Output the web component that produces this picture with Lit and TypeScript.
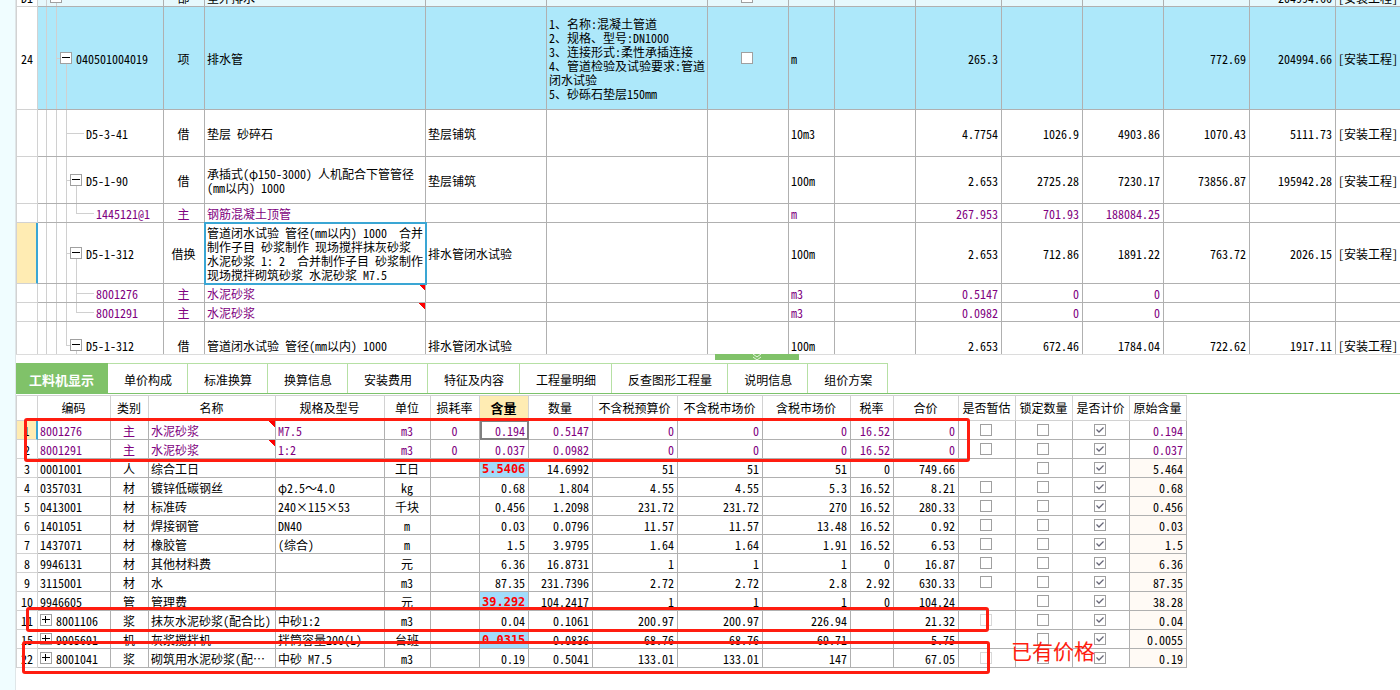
import { LitElement, html, css, nothing } from "lit";
import { customElement } from "lit/decorators.js";
import { classMap } from "lit/directives/class-map.js";

interface CostRow {
  no?: string;
  guides: string[];
  box?: boolean;
  code: string;
  kind: string;
  name: string;
  spec?: string;
  desc?: string;
  check?: boolean;
  unit?: string;
  nums: string[];
  trade?: string;
  size: string;
  tone?: string;
  focus?: boolean;
  flag?: boolean;
}

const TRADE = "[安装工程]";

const COST_ROWS: CostRow[] = [
  { no: "D1", guides: ["tee"], box: true, code: "", kind: "部", name: "室外排水", check: true, nums: ["", "", "", "", "204994.66"], trade: TRADE, size: "h19", tone: "pale" },
  {
    no: "24", guides: ["bar", "tee"], box: true, code: "040501004019", kind: "项", name: "排水管",
    desc: "1、名称:混凝土管道\n2、规格、型号:DN1000\n3、连接形式:柔性承插连接\n4、管道检验及试验要求:管道\n闭水试验\n5、砂砾石垫层150mm",
    check: true, unit: "m", nums: ["265.3", "", "", "772.69", "204994.66"], trade: TRADE, size: "h103", tone: "blue",
  },
  { guides: ["bar", "bar", "tee long"], code: "D5-3-41", kind: "借", name: "垫层 砂碎石", spec: "垫层铺筑", unit: "10m3", nums: ["4.7754", "1026.9", "4903.86", "1070.43", "5111.73"], trade: TRADE, size: "h47" },
  { guides: ["bar", "bar", "tee"], box: true, code: "D5-1-90", kind: "借", name: "承插式(φ150-3000) 人机配合下管管径\n(mm以内) 1000", spec: "垫层铺筑", unit: "100m", nums: ["2.653", "2725.28", "7230.17", "73856.87", "195942.28"], trade: TRADE, size: "h47" },
  { guides: ["bar", "bar", "bar", "ell long"], code: "1445121@1", kind: "主", name: "钢筋混凝土顶管", unit: "m", nums: ["267.953", "701.93", "188084.25", "", ""], size: "h19", tone: "purple" },
  {
    guides: ["bar", "bar", "tee"], box: true, code: "D5-1-312", kind: "借换",
    name: "管道闭水试验 管径(mm以内) 1000  合并\n制作子目 砂浆制作 现场搅拌抹灰砂浆\n水泥砂浆 1: 2  合并制作子目 砂浆制作\n现场搅拌砌筑砂浆 水泥砂浆 M7.5",
    spec: "排水管闭水试验", unit: "100m", nums: ["2.653", "712.86", "1891.22", "763.72", "2026.15"], trade: TRADE, size: "h61", focus: true,
  },
  { guides: ["bar", "bar", "bar", "tee long"], code: "8001276", kind: "主", name: "水泥砂浆", unit: "m3", nums: ["0.5147", "0", "0", "", ""], size: "h19", tone: "purple", flag: true },
  { guides: ["bar", "bar", "bar", "ell long"], code: "8001291", kind: "主", name: "水泥砂浆", unit: "m3", nums: ["0.0982", "0", "0", "", ""], size: "h19", tone: "purple", flag: true },
  { guides: ["bar", "bar", "ell"], box: true, code: "D5-1-312", kind: "借", name: "管道闭水试验 管径(mm以内) 1000", spec: "排水管闭水试验", unit: "100m", nums: ["2.653", "672.46", "1784.04", "722.62", "1917.11"], trade: TRADE, size: "h47" },
];

const TABS = ["工料机显示", "单价构成", "标准换算", "换算信息", "安装费用", "特征及内容", "工程量明细", "反查图形工程量", "说明信息", "组价方案"];

const HEADS = ["编码", "类别", "名称", "规格及型号", "单位", "损耗率", "含量", "数量", "不含税预算价", "不含税市场价", "含税市场价", "税率", "合价", "是否暂估", "锁定数量", "是否计价", "原始含量"];

// no, code, kind, name, spec, unit, loss, content, qty, budget, market, taxed, rate, total, estimate flag, original
const RES_ROWS: string[][] = [
  ["1", "8001276", "主", "水泥砂浆", "M7.5", "m3", "0", "0.194", "0.5147", "0", "0", "0", "16.52", "0", "y", "0.194"],
  ["2", "8001291", "主", "水泥砂浆", "1:2", "m3", "0", "0.037", "0.0982", "0", "0", "0", "16.52", "0", "y", "0.037"],
  ["3", "0001001", "人", "综合工日", "", "工日", "", "5.5406", "14.6992", "51", "51", "51", "0", "749.66", "", "5.464"],
  ["4", "0357031", "材", "镀锌低碳钢丝", "φ2.5～4.0", "kg", "", "0.68", "1.804", "4.55", "4.55", "5.3", "16.52", "8.21", "y", "0.68"],
  ["5", "0413001", "材", "标准砖", "240×115×53", "千块", "", "0.456", "1.2098", "231.72", "231.72", "270", "16.52", "280.33", "y", "0.456"],
  ["6", "1401051", "材", "焊接钢管", "DN40", "m", "", "0.03", "0.0796", "11.57", "11.57", "13.48", "16.52", "0.92", "y", "0.03"],
  ["7", "1437071", "材", "橡胶管", "(综合)", "m", "", "1.5", "3.9795", "1.64", "1.64", "1.91", "16.52", "6.53", "y", "1.5"],
  ["8", "9946131", "材", "其他材料费", "", "元", "", "6.36", "16.8731", "1", "1", "1", "0", "16.87", "y", "6.36"],
  ["9", "3115001", "材", "水", "", "m3", "", "87.35", "231.7396", "2.72", "2.72", "2.8", "2.92", "630.33", "y", "87.35"],
  ["10", "9946605", "管", "管理费", "", "元", "", "39.292", "104.2417", "1", "1", "1", "0", "104.24", "", "38.28"],
  ["11", "+8001106", "浆", "抹灰水泥砂浆(配合比)", "中砂1:2", "m3", "", "0.04", "0.1061", "200.97", "200.97", "226.94", "", "21.32", "d", "0.04"],
  ["15", "+9905691", "机", "灰浆搅拌机", "拌筒容量200(L)", "台班", "", "0.0315", "0.0836", "68.76", "68.76", "69.71", "", "5.75", "", "0.0055"],
  ["22", "+8001041", "浆", "砌筑用水泥砂浆(配…", "中砂 M7.5", "m3", "", "0.19", "0.5041", "133.01", "133.01", "147", "", "67.05", "d", "0.19"],
];

const CHANGED = new Set(["3", "10", "15"]);

const sheet = css`
  :host { display: block; }
  table {
    border-collapse: separate;
    border-spacing: 0;
    table-layout: fixed;
    font-size: 12px;
  }
  td, th {
    box-sizing: border-box;
    padding: 2px 3px 0 2px;
    border-right: 1px solid #b0b0b0;
    border-bottom: 1px solid #b0b0b0;
    font-weight: normal;
    text-align: left;
    vertical-align: middle;
    line-height: 14px;
    white-space: pre;
    overflow: hidden;
  }
  .no {
    padding: 2px 0 0;
    border-left: 1px solid #d2d2d2;
    border-right-color: #d2d2d2;
    border-bottom-color: #d2d2d2;
    text-align: center;
    background: #fff;
    color: #000;
  }
  .no.current { background: #ffecb3; border-right: 2px solid #3aa6d4; }
  .mid { text-align: center; padding: 2px 1px 0 0; }
  .tick { padding: 0 2px 0 0; }
  .num { text-align: right; }
  .purple { color: #800080; }
  .flag {
    background: linear-gradient(to bottom left, #f00 50%, transparent 50%) top right / 7px 6px no-repeat;
  }
  input {
    appearance: none;
    display: block;
    width: 12px;
    height: 12px;
    margin: 0 auto;
    border: 1px solid #a0a0a0;
    background: #fff;
  }
  input:checked {
    background: url("data:image/svg+xml,%3Csvg xmlns='http://www.w3.org/2000/svg' viewBox='0 0 10 10'%3E%3Cpath d='M1.5 4.5 4 7 8.5 2.5' fill='none' stroke='%23667' stroke-width='1.3'/%3E%3C/svg%3E") center / 10px 10px no-repeat #fff;
  }
  input:disabled { border-color: #d8d8d8; }
  .box {
    flex: none;
    display: flex;
    box-sizing: border-box;
    width: 12px;
    height: 12px;
    padding: 0;
    border: 1px solid #a0a0a0;
    background: #fff;
    white-space: normal;
  }
  .box svg { display: block; flex: none; width: 10px; height: 10px; }
`;

const toggle = (open: boolean) => html`<button class="box" type="button" aria-label=${open ? "收起" : "展开"}><svg viewBox="0 0 10 10"><path d=${open ? "M1 4H9V5H1Z" : "M1 4H9V5H1ZM4 1H5V8H4Z"} fill="#000" shape-rendering="crispEdges" /></svg></button>`;

@customElement("cost-grid")
class CostGrid extends LitElement {
  static styles = [sheet, css`
    table { width: 100%; min-width: 1384px; }
    td:last-child { border-right: 0; }
    .w22 { width: 22px; } .w126 { width: 126px; } .w41 { width: 41px; } .w221 { width: 221px; }
    .w121 { width: 121px; } .w161 { width: 161px; } .w81 { width: 81px; } .w46 { width: 46px; } .w86 { width: 86px; }
    .h19 td { height: 19px; } .h47 td { height: 47px; } .h61 td { height: 61px; } .h103 td { height: 103px; }
    tr.pale td:not(.no) { background-color: #e6f8fc; }
    tr.blue td:not(.no) { background-color: #ade8fa; }
    td.code { padding: 0 0 0 8px; }
    .tree { display: flex; align-items: center; height: 100%; }
    .guide {
      --c: linear-gradient(#d0d0d0, #d0d0d0);
      flex: none;
      align-self: stretch;
      width: 10px;
      background: var(--c) 0 0 / 1px 100% no-repeat;
    }
    .tee { width: 4px; background: var(--c) 0 0 / 1px 100% no-repeat, var(--c) 0 50% / 100% 1px no-repeat; }
    .ell { width: 4px; background: var(--c) 0 0 / 1px 50% no-repeat, var(--c) 0 50% / 100% 1px no-repeat; }
    .long { width: 18px; }
    .stem {
      flex: none;
      align-self: stretch;
      display: flex;
      align-items: center;
      width: 12px;
      margin-right: 2px;
      background: linear-gradient(#d0d0d0, #d0d0d0) 6px 100% / 1px 50% no-repeat;
    }
    .label { padding: 2px 0 0 2px; }
    td.focus { position: relative; outline: 2px solid #3aa6d4; outline-offset: -1px; }
  `];

  render() {
    const widths = [22, 126, 41, 221, 121, 161, 81, 46, 81, 86, 81, 81, 86, 86];
    return html`<table>
      <colgroup>${widths.map((w) => html`<col class="w${w}" />`)}<col /></colgroup>
      <tbody>${COST_ROWS.map((r) => html`
        <tr class="${r.size} ${r.tone ?? ""}">
          <td class=${classMap({ no: true, current: !!r.focus })}>${r.no}</td>
          <td class="code"><div class="tree">${r.guides.map((g) => html`<span class="guide ${g}"></span>`)}${r.box ? html`<span class="stem">${toggle(true)}</span>` : nothing}<span class="label">${r.code}</span></div></td>
          <td class="mid">${r.kind}</td>
          <td class=${classMap({ focus: !!r.focus, flag: !!r.flag })}>${r.name}</td>
          <td>${r.spec}</td>
          <td>${r.desc}</td>
          <td class="tick">${r.check ? html`<input type="checkbox" aria-label="主要清单" />` : nothing}</td>
          <td>${r.unit}</td>
          <td></td>
          ${r.nums.map((n) => html`<td class="num">${n}</td>`)}
          <td>${r.trade}</td>
        </tr>`)}</tbody>
    </table>`;
  }
}

@customElement("resource-grid")
class ResourceGrid extends LitElement {
  static styles = [sheet, css`
    .wrap { position: relative; width: max-content; }
    table { width: 1171px; }
    .w22 { width: 22px; } .w73 { width: 73px; } .w38 { width: 38px; } .w127 { width: 127px; } .w109 { width: 109px; }
    .w46 { width: 46px; } .w49 { width: 49px; } .w64 { width: 64px; } .w85 { width: 85px; } .w88 { width: 88px; }
    .w43 { width: 43px; } .w65 { width: 65px; } .w57 { width: 57px; }
    th { height: 26px; padding: 0 1px 0 0; text-align: center; border-color: #d2d2d2; border-top: 1px solid #d2d2d2; }
    td { height: 19px; }
    th.hot { background: #ffecb3; font-size: 13px; font-weight: bold; }
    td.changed { background: #a2dcfb; color: #f00; font-family: "DejaVu Sans Mono", monospace; font-weight: bold; }
    td.cell { border: 2px solid #808080; border-top-width: 1px; padding-right: 2px; }
    td.warm { background: #fffaf5; }
    .code { display: flex; align-items: center; gap: 4px; }
    td.fold { padding-top: 0; }
    .fold span { padding-top: 2px; }
    .mark { position: absolute; box-sizing: border-box; border: 3px solid #ff1d10; border-radius: 3px; pointer-events: none; }
    .m1 { left: 8px; top: 23px; width: 946px; height: 44px; }
    .m2 { left: 10px; top: 212px; width: 963px; height: 25px; }
    .m3 { left: 6px; top: 246px; width: 968px; height: 33px; }
    .note {
      position: absolute;
      left: 995px;
      top: 241px;
      margin: 0;
      font: 400 21px/28px "Noto Sans CJK SC", sans-serif;
      color: #ff1d10;
      white-space: nowrap;
    }
  `];

  render() {
    const widths = [22, 73, 38, 127, 109, 46, 49, 49, 64, 85, 85, 88, 43, 65, 57, 57, 57, 57];
    return html`<div class="wrap">
      <table>
        <colgroup>${widths.map((w) => html`<col class="w${w}" />`)}</colgroup>
        <thead><tr><th class="no"></th>${HEADS.map((h) => html`<th class=${h === "含量" ? "hot" : ""}>${h}</th>`)}</tr></thead>
        <tbody>${RES_ROWS.map((r, i) => {
          const fresh = i < 2;
          const folded = r[1].startsWith("+");
          return html`<tr class=${fresh ? "purple" : ""}>
            <td class=${classMap({ no: true, current: i === 0 })}>${r[0]}</td>
            <td class=${folded ? "fold" : ""}><div class="code">${folded ? toggle(false) : nothing}<span>${r[1].replace("+", "")}</span></div></td>
            <td class="mid">${r[2]}</td>
            <td class=${fresh ? "flag" : ""}>${r[3]}</td>
            <td>${r[4]}</td>
            <td class="mid">${r[5]}</td>
            <td class="mid">${r[6]}</td>
            <td class=${classMap({ num: true, cell: i === 0, changed: CHANGED.has(r[0]) })}>${r[7]}</td>
            ${r.slice(8, 14).map((n) => html`<td class="num">${n}</td>`)}
            <td class="tick">${r[14] ? html`<input type="checkbox" aria-label="是否暂估" ?disabled=${r[14] === "d"} />` : nothing}</td>
            <td class="tick"><input type="checkbox" aria-label="锁定数量" /></td>
            <td class="tick"><input type="checkbox" aria-label="是否计价" checked /></td>
            <td class=${classMap({ num: true, warm: !fresh })}>${r[15]}</td>
          </tr>`;
        })}</tbody>
      </table>
      <div class="mark m1"></div>
      <div class="mark m2"></div>
      <div class="mark m3"></div>
      <p class="note">已有价格</p>
    </div>`;
  }
}

@customElement("app-root")
class AppRoot extends LitElement {
  static styles = css`
    :host {
      display: flex;
      height: 100vh;
      overflow: hidden;
      background: #fff;
      color: #000;
      font-family: "Noto Sans Mono CJK SC", "Noto Sans CJK SC", sans-serif;
      font-size: 12px;
    }
    .rail { flex: none; box-sizing: border-box; width: 16px; background: #f0fdff; border-right: 1px solid #dfe6e8; }
    .main { flex: 1; min-width: 0; display: flex; flex-direction: column; }
    .upper { flex: 1; min-height: 0; overflow: hidden; }
    .upper cost-grid { margin-top: -12px; }
    .lower { flex: none; padding-bottom: 22px; }
    .split { display: flex; justify-content: center; height: 8px; padding-left: 98px; border-top: 1px solid #dcdcdc; }
    .grip { width: 84px; height: 6px; margin-top: -1px; padding: 0; border: 0; background: #80c269; }
    .grip svg { display: block; width: 10px; height: 6px; margin: 0 auto; }
    .tabs { display: flex; height: 30px; margin-bottom: 1px; border-bottom: 1px solid #7cc36b; }
    .tab {
      padding: 2px 15px 0 16px;
      border: 0;
      border-top: 1px solid #b6e0a4;
      border-right: 1px solid #b6e0a4;
      background: #fff;
      color: #000;
      font: inherit;
      white-space: nowrap;
    }
    .tab.on { padding: 2px 13px 0; background: #80c269; border-color: #80c269; color: #fff; font-size: 13px; font-weight: bold; }
  `;

  render() {
    return html`
      <div class="rail"></div>
      <div class="main">
        <section class="upper"><cost-grid></cost-grid></section>
        <section class="lower">
          <div class="split">
            <button class="grip" type="button" aria-label="收起面板">
              <svg viewBox="0 0 10 6"><path d="M1 0 5 3 9 0M1 3 5 6 9 3" fill="none" stroke="#e8f6e2" /></svg>
            </button>
          </div>
          <nav class="tabs">${TABS.map((t, i) => html`<button type="button" class=${classMap({ tab: true, on: i === 0 })}>${t}</button>`)}</nav>
          <resource-grid></resource-grid>
        </section>
      </div>`;
  }
}
